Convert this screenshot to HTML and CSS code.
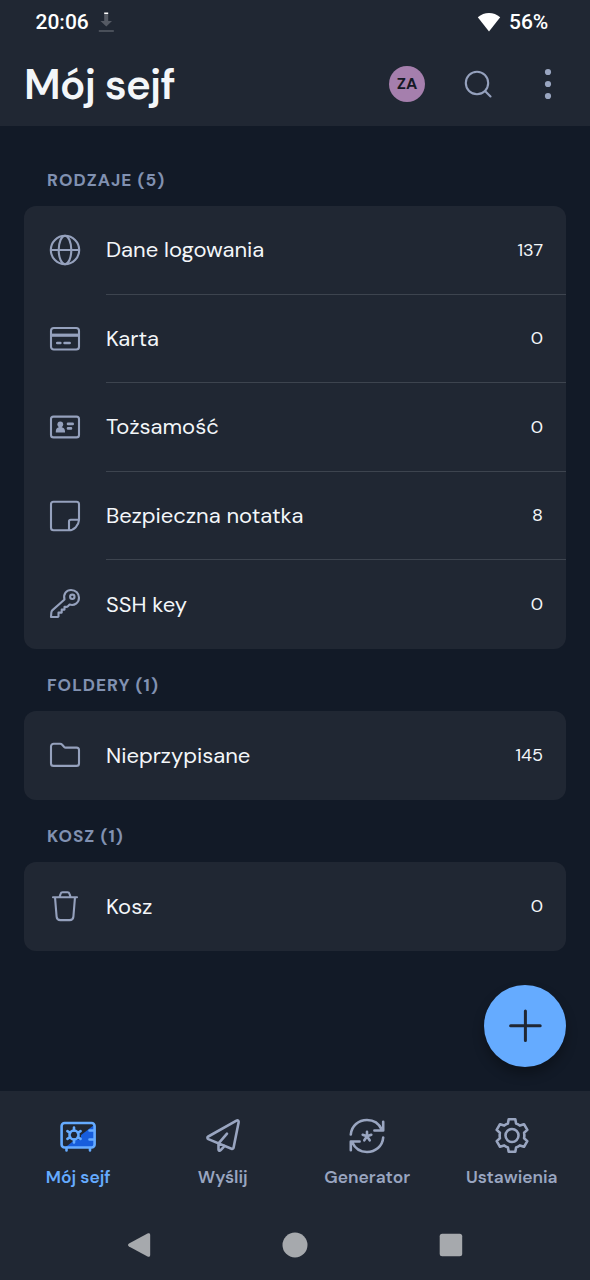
FILE: index.html
```html
<!DOCTYPE html>
<html lang="pl">
<head>
<meta charset="utf-8">
<title>Mój sejf</title>
<link rel="stylesheet" href="styles.css">
</head>
<body>
<div class="screen">
  <div class="status">
    <span class="clock">20:06</span>
    <svg class="download" width="16" height="22" viewBox="0 0 16 22"><path d="M6.200 3h4v7H14l-5.700 5.500L2.500 10h3.700z" fill="#555a64"/><path d="M6.200 1.500h4v1.500h-4z" fill="#fff"/><path d="M.8 20h15" stroke="#555a64" stroke-width="1.600"/></svg>
    <svg class="wifi" width="24" height="20" viewBox="0 0 24 20"><path d="M12 19.500.8 5.300C4 2.500 8 1 12 1s8 1.500 11.200 4.300z" fill="#fff"/></svg>
    <span class="battery">56%</span>
  </div>
  <header class="header">
    <h1 class="title">Mój sejf</h1>
    <span class="avatar">ZA</span>
    <svg class="search icon" width="30" height="30" viewBox="0 0 30 30"><circle cx="14" cy="14" r="11.200"/><path d="m22 22 5.500 5.500"/></svg>
    <svg class="more" width="8" height="32" viewBox="0 0 8 32"><circle cx="4" cy="4" r="3.100"/><circle cx="4" cy="16" r="3.100"/><circle cx="4" cy="28" r="3.100"/></svg>
  </header>
  <main class="content">
    <h2 class="section types">RODZAJE (5)</h2>
    <div class="card">
      <div class="row"><svg class="icon" viewBox="0 0 36 36"><circle cx="18" cy="18" r="14.200"/><ellipse cx="18" cy="18" rx="6.300" ry="14.200"/><path d="M4 18h28"/></svg>
        <div class="cell"><span class="name">Dane logowania</span><span class="count">137</span></div></div>
      <div class="row"><svg class="icon" viewBox="0 0 36 36"><rect x="4" y="7" width="28" height="21.500" rx="2.800"/><path d="M5 14.200h26" stroke-width="3.200" stroke-linecap="butt"/><path d="M10.300 22h3M17.600 22h5" stroke-width="2.700"/></svg>
        <div class="cell"><span class="name">Karta</span><span class="count">0</span></div></div>
      <div class="row"><svg class="icon" viewBox="0 0 36 36"><rect x="4" y="7.600" width="28" height="20.800" rx="2.500"/><circle class="fill" cx="13.300" cy="15.300" r="2.900"/><path class="fill" d="M8.800 23.500v-1.300c0-2 1.300-3.600 3-3.900v-2h3v2c1.800.3 3.200 1.900 3.200 3.900v1.300z"/><path d="M21 14.900h4.700M21 19.400h3" stroke-width="2.600"/></svg>
        <div class="cell"><span class="name">Tożsamość</span><span class="count">0</span></div></div>
      <div class="row"><svg class="icon" viewBox="0 0 36 36"><path d="M22 32.200H6.500A2.500 2.500 0 0 1 4 29.700V6.300a2.500 2.500 0 0 1 2.500-2.500h23A2.500 2.500 0 0 1 32 6.300V22c-.3 5.500-5 10.200-10 10.200zM22 32v-8.500c0-1 .8-1.800 1.800-1.800H32"/></svg>
        <div class="cell"><span class="name">Bezpieczna notatka</span><span class="count">8</span></div></div>
      <div class="row"><svg class="icon" viewBox="0 0 36 36"><path d="M17.500 13.500C16 7.800 19.500 4 24 4c4.800 0 8 3.500 8 7.800 0 5-4.600 8.300-9.400 6.800l-1.700 1.700c-.5.500-1 .6-1.700.6h-1.700v2.700h-2.800v3h-3.200v3.700L10.800 31H4l.3-4.300c.1-1.200.4-1.800 1.200-2.600z"/><circle cx="25.300" cy="10.800" r="2.200"/></svg>
        <div class="cell"><span class="name">SSH key</span><span class="count">0</span></div></div>
    </div>
    <h2 class="section folders">FOLDERY (1)</h2>
    <div class="card">
      <div class="row"><svg class="icon" viewBox="0 0 36 36"><path d="M6.800 6.800H13c1 0 1.600.3 2.200 1l2 2.200c.4.400.8.600 1.400.6h10.900a2.500 2.500 0 0 1 2.500 2.500v13.300a2.500 2.500 0 0 1-2.500 2.500h-23A2.500 2.500 0 0 1 4 26.400V9.500a2.700 2.700 0 0 1 2.800-2.700z"/></svg>
        <div class="cell"><span class="name">Nieprzypisane</span><span class="count">145</span></div></div>
    </div>
    <h2 class="section trash">KOSZ (1)</h2>
    <div class="card">
      <div class="row"><svg class="icon" viewBox="0 0 36 36"><path d="M6 9.200h24M8 9.200l1.600 19.400c.2 2.300 1.500 3.500 3.800 3.500h9.200c2.300 0 3.600-1.200 3.800-3.500L28 9.200M12.600 8.800l1-3c.3-1 1-1.500 2-1.500h4.900c1 0 1.700.5 2 1.500l1 3"/></svg>
        <div class="cell"><span class="name">Kosz</span><span class="count">0</span></div></div>
    </div>
    <button class="fab" aria-label="Dodaj"><svg width="36" height="36" viewBox="0 0 36 36"><path d="M18.400 3v29.600M3.600 17.800h29.600"/></svg></button>
  </main>
  <footer class="footer">
    <nav class="tabs">
      <a class="tab active"><svg class="glyph" viewBox="0 0 40 40"><path d="M7 31.500 36 9v22.500z" fill="#175ddc" stroke="none"/><path d="m11 24 12-9.500v9z" fill="#202733" stroke="none"/><rect x="3.600" y="7" width="33" height="24.500" rx="3"/><path d="M8.500 32v2.500M32 32v2.500M31.500 14.500H36M31.500 23.500H36"/><circle class="dial" cx="16" cy="19" r="4.500"/><path d="M16 14.500v-3M16 23.500v3M12.200 16.800l-2.800-1.700M19.800 16.800l2.800-1.700M12.200 21.200l-2.800 1.700M19.800 21.200l2.800 1.700"/></svg><span class="tab-label">Mój sejf</span></a>
      <a class="tab"><svg class="glyph" viewBox="0 0 40 40"><path d="M33.500 4.700 5.300 20.500c-1.200.7-1.200 2 0 2.600l23.200 9.600c1.100.4 1.900 0 2.100-1.200l5-25c.3-1.600-.7-2.600-2.100-1.800zM15.500 27.400v6c0 1.300 1.200 1.800 2.200.8l4-4.300M15.800 27.200 24 17.700"/></svg><span class="tab-label">Wyślij</span></a>
      <a class="tab"><svg class="glyph" viewBox="0 0 40 40"><path d="M3.800 18.500C4.500 9.700 11.500 4 20 4c6.300 0 12 3.500 14.800 9.700M36.200 21.500C35.500 30.300 28.500 36 20 36c-6.300 0-12-3.500-14.800-9.700M36.200 5.700v8.800h-8.800M3.800 34.300v-8.800h8.800"/><path d="M20 20.300v-4.500M20 20.300l-4.300-1.500M20 20.300l4.300-1.500M20 20.300l-2.700 4M20 20.300l2.700 4"/></svg><span class="tab-label">Generator</span></a>
      <a class="tab"><svg class="glyph" viewBox="0 0 40 40"><circle cx="20" cy="19.500" r="6.500"/><path d="M16.700 3.300h6.600l.8 4.300c1.300.4 2.600 1.100 3.700 2l4.200-1.400 3.300 5.700-3.200 2.900c.3 1.700.3 3.600 0 5.400l3.200 2.900-3.300 5.700-4.200-1.400c-1.100.9-2.400 1.600-3.700 2l-.8 4.300h-6.600l-.8-4.300c-1.300-.4-2.600-1.100-3.700-2L8 30.800l-3.300-5.700 3.200-2.900c-.3-1.800-.3-3.700 0-5.400l-3.200-2.900L8 8.200l4.200 1.400c1.100-.9 2.400-1.600 3.700-2z"/></svg><span class="tab-label">Ustawienia</span></a>
    </nav>
    <div class="system">
      <svg width="24" height="26" viewBox="0 0 24 26"><path d="M20.500 1.500 2 11.500c-1.300.8-1.300 2.200 0 3l18.500 10c1.500.8 2.700.2 2.700-1.500V3c0-1.700-1.200-2.300-2.700-1.500z"/></svg>
      <svg width="26" height="26" viewBox="0 0 26 26"><circle cx="13" cy="13" r="12.500"/></svg>
      <svg width="24" height="24" viewBox="0 0 24 24"><rect x=".7" y=".8" width="22.500" height="22.500" rx="2.500"/></svg>
    </div>
  </footer>
</div>
</body>
</html>
```
FILE: styles.css
```css
* { box-sizing: border-box; }
body { margin: 0; background: #121a27; font-family: "DM Sans", Inter, "Open Sans", sans-serif; color: #f3f6f9; }
.screen { width: 590px; height: 1280px; display: flex; flex-direction: column; }
.status { height: 42px; display: flex; align-items: center; padding: 1px 40px 0 35.5px; background: #202733; color: #fff; font: 500 21px/42px Roboto, sans-serif; }
.clock { width: 54px; }
.download { margin-left: 8px; }
.wifi { margin-left: auto; margin-right: 8px; }
.battery { width: 41px; }
.header { height: 84px; display: flex; align-items: center; padding: 0 38px 0 24px; background: #202733; }
.title { margin: 0 auto 0 0; padding-top: 2px; font-size: 42px; line-height: 82px; font-weight: 600; letter-spacing: -.7px; }
.avatar { width: 36px; height: 36px; border-radius: 50%; background: #a57fad; color: #141925; font-size: 16px; line-height: 36px; font-weight: 700; text-align: center; }
.search { width: 30px; height: 30px; margin-left: 38px; }
.more { margin-left: 51px; fill: #99a5c0; }
.icon { fill: none; stroke: #95a1bd; stroke-width: 2.1; stroke-linecap: round; stroke-linejoin: round; }
.fill { fill: #95a1bd; stroke: none; }
.content { flex: 1; position: relative; padding: 42px 24px 0; }
.section { margin: 0; padding: 0 23px; line-height: 24px; font-size: 17.3px; font-weight: 700; color: #8191b1; letter-spacing: 1px; }
.types { height: 38px; }
.folders, .trash { height: 62.5px; padding-top: 24px; }
.card { background: #202733; border-radius: 12px; }
.row { display: flex; align-items: center; height: 88.5px; padding-left: 22.7px; }
.row .icon { flex: none; width: 36px; height: 36px; }
.cell { flex: 1; height: 100%; margin-left: 23.3px; padding-right: 23px; display: flex; align-items: center; justify-content: space-between; border-bottom: 1px solid #3d444f; }
.row:last-child .cell { border-bottom: 0; }
.name { font-size: 22px; }
.count { font-size: 18px; line-height: 24px; }
.fab { position: absolute; right: 24px; bottom: 24px; width: 82px; height: 82px; border: 0; border-radius: 50%; background: #65abff; display: grid; place-items: center; box-shadow: 0 7px 12px rgba(0, 0, 0, .3); }
.fab svg { fill: none; stroke: #202733; stroke-width: 3; stroke-linecap: round; }
.footer { height: 189px; background: #202733; }
.tabs { display: flex; height: 119px; padding: 0 6px; }
.tab { flex: 1; display: flex; flex-direction: column; align-items: center; padding-top: 25px; color: #99a5c0; }
.active { color: #65abff; }
.glyph { width: 40px; height: 40px; fill: none; stroke: currentColor; stroke-width: 2.6; stroke-linecap: round; stroke-linejoin: round; }
.dial { fill: #202733; }
.tab-label { margin-top: 9px; font-size: 17.4px; line-height: 24px; font-weight: 600; }
.system { display: flex; justify-content: space-between; align-items: center; height: 69px; padding: 0 127px; fill: #a6a9ad; }
```
